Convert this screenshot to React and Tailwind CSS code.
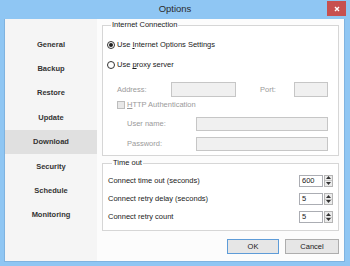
import React from 'react'

const font = { fontFamily: '"Liberation Sans", Arial, sans-serif' }

const nav = ['General', 'Backup', 'Restore', 'Update', 'Download', 'Security', 'Schedule', 'Monitoring']

function Radio({ checked }) {
  return (
    <span className="w-[8px] h-[8px] rounded-full border border-[#333] bg-white flex items-center justify-center shrink-0">
      {checked && <span className="w-[4px] h-[4px] rounded-full bg-[#222]" />}
    </span>
  )
}

function Spinner({ value }) {
  return (
    <div className="flex items-center gap-[1px]">
      <div className="w-[24px] h-[12px] border border-[#abadb3] bg-white text-[7.5px] leading-[10px] pl-[2px] text-[#1a1a1a]">
        {value}
      </div>
      <div className="flex flex-col w-[9px] h-[12px] border border-[#b5b5b5] bg-[#ececec]">
        <div className="flex-1 flex items-center justify-center border-b border-[#c8c8c8]">
          <svg width="5" height="3" viewBox="0 0 5 3"><path d="M2.5 0L5 3H0z" fill="#333" /></svg>
        </div>
        <div className="flex-1 flex items-center justify-center">
          <svg width="5" height="3" viewBox="0 0 5 3"><path d="M0 0h5L2.5 3z" fill="#333" /></svg>
        </div>
      </div>
    </div>
  )
}

export default function App() {
  return (
    <div className="w-[350px] h-[266px] bg-[#8fc6f3] flex flex-col relative text-[#1a1a1a]" style={font}>
      {/* Title bar */}
      <div className="h-[19px] flex items-center justify-center text-[9.5px] text-[#2b2b2b]">Options</div>
      <div className="absolute top-[1px] right-[4px] w-[19px] h-[15px] bg-[#c75050] flex items-center justify-center">
        <svg width="6" height="6" viewBox="0 0 6 6"><path d="M1 1l4 4M5 1L1 5" stroke="#fff" strokeWidth="1.4" /></svg>
      </div>

      {/* Client */}
      <div className="ml-[4px] mr-[5px] h-[243px] border-x border-b border-[#7fb3e0] flex bg-[#fcfcfc]">
        {/* Sidebar */}
        <div className="w-[92px] bg-[#f5f5f5] pt-[13px] flex flex-col">
          {nav.map((n) => (
            <div
              key={n}
              className={`h-[24.4px] flex items-center justify-center text-[7.5px] font-bold text-[#333] ${n === 'Download' ? 'bg-[#e0e0e0] text-[#111]' : ''}`}
            >
              {n}
            </div>
          ))}
        </div>

        {/* Content */}
        <div className="flex-1 pl-[5px] pr-[5px] pt-[1px] flex flex-col">
          <fieldset className="border border-[#d6d6d6] pl-[4px] pb-[4px] bg-white">
            <legend className="ml-[4px] px-[1px] text-[7.5px] leading-[10px]">Internet Connection</legend>
            <div className="h-[20px] mt-[5px] flex items-center gap-[2px] text-[7.5px]">
              <Radio checked />
              <span>Use <u>I</u>nternet Options Settings</span>
            </div>
            <div className="h-[20px] flex items-center gap-[2px] text-[7.5px]">
              <Radio />
              <span>Use <u>p</u>roxy server</span>
            </div>
            <div className="h-[15px] mt-[7px] flex items-center pl-[10px] text-[7.5px] text-[#9a9a9a]">
              <span className="w-[54px]">Address:</span>
              <div className="w-[65px] h-[15px] border border-[#c6c6c6] bg-[#f0f0f0]" />
              <span className="ml-[24px] w-[34px]">Port:</span>
              <div className="w-[34px] h-[15px] border border-[#c6c6c6] bg-[#f0f0f0]" />
            </div>
            <div className="h-[13px] mt-[1px] flex items-center gap-[2px] pl-[10px] text-[7.5px] text-[#9a9a9a]">
              <span className="w-[8px] h-[8px] border border-[#bdbdbd] bg-[#e8e8e8]" />
              <span><u>H</u>TTP Authentication</span>
            </div>
            <div className="h-[14px] mt-[6px] flex items-center pl-[20px] text-[7.5px] text-[#9a9a9a]">
              <span className="w-[69px]">User name:</span>
              <div className="w-[132px] h-[14px] border border-[#c6c6c6] bg-[#f0f0f0]" />
            </div>
            <div className="h-[14px] mt-[6px] flex items-center pl-[20px] text-[7.5px] text-[#9a9a9a]">
              <span className="w-[69px]">Password:</span>
              <div className="w-[132px] h-[14px] border border-[#c6c6c6] bg-[#f0f0f0]" />
            </div>
          </fieldset>

          <fieldset className="mt-[2px] border border-[#d6d6d6] pl-[5px] pr-[5px] pb-[4px] bg-white">
            <legend className="ml-[4px] px-[1px] text-[7.5px] leading-[10px]">Time out</legend>
            <div className="mt-[3px] h-[19px] flex items-center justify-between text-[7.5px]">
              <span>Connect time out (seconds)</span>
              <Spinner value="600" />
            </div>
            <div className="h-[18px] flex items-center justify-between text-[7.5px]">
              <span>Connect retry delay (seconds)</span>
              <Spinner value="5" />
            </div>
            <div className="h-[18px] flex items-center justify-between text-[7.5px]">
              <span>Connect retry count</span>
              <Spinner value="5" />
            </div>
          </fieldset>

          <div className="mt-[8px] flex justify-end gap-[6px]">
            <button className="w-[52px] h-[15px] border border-[#5e9cd8] bg-[#e6e6e6] text-[7.5px] text-[#1a1a1a]">OK</button>
            <button className="w-[54px] h-[15px] border border-[#adadad] bg-[#e6e6e6] text-[7.5px] text-[#1a1a1a]">Cancel</button>
          </div>
        </div>
      </div>
    </div>
  )
}
